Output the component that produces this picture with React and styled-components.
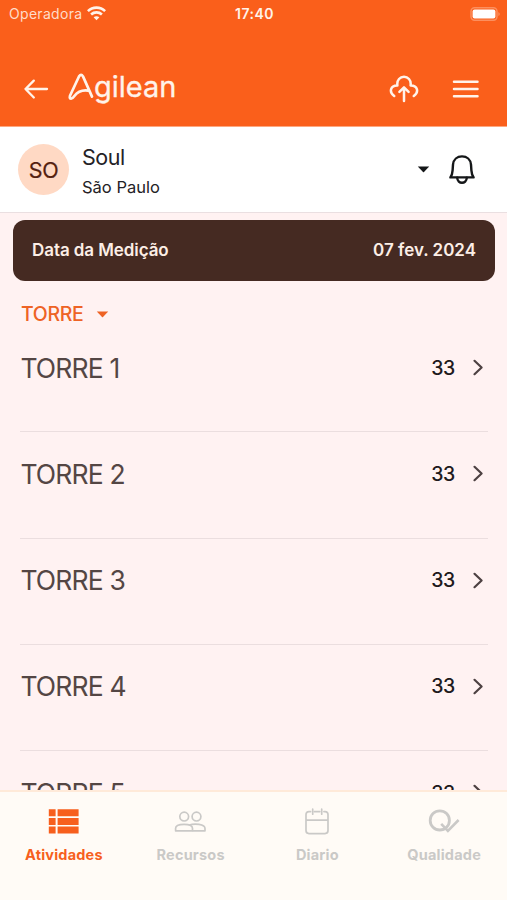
import React from "react";
import styled, { createGlobalStyle } from "styled-components";

const GlobalStyle = createGlobalStyle`
  *, *::before, *::after { box-sizing: border-box; }
  html, body { margin: 0; padding: 0; overflow: hidden; }
  body { font-family: Inter, "Liberation Sans", sans-serif; }
  svg { display: block; flex: none; }
  button { border: 0; padding: 0; background: none; font: inherit; color: inherit; }
`;

const Screen = styled.div`
  display: flex;
  flex-direction: column;
  width: 507px;
  height: 900px;
  overflow: hidden;
  background: #fff2f2;
`;

const Header = styled.header`
  flex: none;
  height: 127px;
  background: #fa5f1b;
  color: #fff3ea;
  border-bottom: 1px solid #fda880;
`;

const StatusBar = styled.div`
  display: grid;
  grid-template-columns: 1fr auto 1fr;
  align-items: center;
  height: 27px;
  padding: 0 7px 0 9px;
  font-size: 14px;
  line-height: 20px;
`;

const Carrier = styled.div`
  display: flex;
  align-items: center;
  gap: 5px;
  letter-spacing: 0.3px;
  color: #ffdcc9;
`;

const Clock = styled.div`
  font-weight: 600;
  letter-spacing: 0.5px;
`;

const BatterySlot = styled.div`
  justify-self: end;
`;

const Toolbar = styled.div`
  display: flex;
  align-items: center;
  height: 99px;
  padding: 24px 28px 0 23px;
`;

const Logo = styled.div`
  display: flex;
  align-items: center;
  height: 40px;
  margin: -3px 0 0 18px;
`;

const LogoText = styled.span`
  font-size: 29px;
  line-height: 36px;
  margin-left: -1px;
  letter-spacing: 0;
  -webkit-text-stroke: 0.3px;
`;

const Actions = styled.div`
  display: flex;
  align-items: center;
  gap: 33px;
  margin-left: auto;
`;

const Profile = styled.section`
  flex: none;
  display: flex;
  align-items: center;
  height: 86px;
  padding: 0 31px 0 18px;
  background: #fff;
  border-bottom: 1px solid #eadfe1;
`;

const Avatar = styled.div`
  display: flex;
  align-items: center;
  justify-content: center;
  width: 51px;
  height: 51px;
  border-radius: 50%;
  background: #ffd9c4;
  color: #54200f;
  font-size: 21.5px;
  letter-spacing: -0.4px;
  -webkit-text-stroke: 0.2px;
`;

const Identity = styled.div`
  display: flex;
  flex-direction: column;
  margin-left: 13px;
  padding-top: 4px;
  color: #242226;
`;

const Name = styled.div`
  font-size: 21.5px;
  line-height: 31px;
  letter-spacing: -0.5px;
`;

const City = styled.div`
  font-size: 16.5px;
  line-height: 29px;
`;

const ProfileActions = styled.div`
  display: flex;
  align-items: center;
  gap: 18px;
  margin-left: auto;
  color: #151719;
`;

const DateCard = styled.section`
  flex: none;
  display: flex;
  align-items: center;
  justify-content: space-between;
  height: 61px;
  margin: 7px 12px 0 13px;
  padding: 0 19px 2px;
  border-radius: 12px;
  background: #452a22;
  color: #fceee6;
  font-size: 17px;
  font-weight: 600;
`;

const DateText = styled.span`
  letter-spacing: ${(p) => p.$spacing}px;
`;

const LevelFilter = styled.button`
  flex: none;
  display: flex;
  align-items: center;
  gap: 13px;
  height: 45px;
  padding: 21px 0 0 21px;
  color: #ee6325;
  font-size: 19.5px;
  font-weight: 500;
  line-height: 24px;
  letter-spacing: -0.35px;
`;

const List = styled.main`
  flex: 1;
  min-height: 0;
  overflow: hidden;
  padding: 0 19px 0 20px;
`;

const Row = styled.div`
  display: flex;
  align-items: flex-start;
  height: 106.25px;
  padding: 25.5px 3px 0 0.4px;
  border-bottom: 1px solid #ebdedf;
  line-height: 33px;
`;

const RowTitle = styled.span`
  font-size: 26.5px;
  letter-spacing: -0.85px;
  color: #544644;
`;

const RowCount = styled.span`
  margin-left: auto;
  font-size: 19.5px;
  font-weight: 500;
  letter-spacing: -0.3px;
  color: #211a1c;
`;

const Chevron = styled.svg`
  margin: 7.5px 0 0 17px;
`;

const TabBar = styled.nav`
  flex: none;
  display: grid;
  grid-template-columns: repeat(4, 1fr);
  height: 110px;
  padding-top: 15px;
  border-top: 2px solid #ffead9;
  background: #fffbf6;
`;

const Tab = styled.button`
  display: flex;
  flex-direction: column;
  align-items: center;
  justify-content: flex-start;
  gap: 8px;
  color: ${(p) => (p.$active ? "#f75f1d" : "#cac9c7")};
`;

const TabLabel = styled.span`
  font-size: 14.5px;
  font-weight: 700;
  line-height: 20px;
  letter-spacing: 0.2px;
  padding-left: 1px;
`;

const WifiIcon = () => (
  <svg width="19" height="15" viewBox="0 0 19 15" fill="none" stroke="#fff3ea" strokeWidth="2.6">
    <path d="M.9 5.1C5.6.4 13.4.4 18.1 5.1" />
    <path d="M4.1 8.5c3-2.8 7.8-2.8 10.8 0" />
    <path d="M6.6 11.3q2.9-2.3 5.8 0L9.5 14.2z" fill="#fff3ea" stroke="none" />
  </svg>
);

const BatteryIcon = () => (
  <svg width="30" height="14" viewBox="0 0 30 14">
    <rect x="1" y="0.8" width="26" height="12.4" rx="3.6" fill="none" stroke="#fc8f5e" strokeWidth="1.5" />
    <rect x="2.6" y="2.4" width="22.8" height="9.2" rx="2" fill="#fff" />
    <path d="M28.3 4.9q1.5.7 1.5 2.1t-1.5 2.1z" fill="#fc8f5e" />
  </svg>
);

const BackIcon = () => (
  <svg width="27" height="22" viewBox="0 0 27 22" fill="none" stroke="currentColor" strokeWidth="2.3" strokeLinecap="round" strokeLinejoin="round">
    <path d="M24 11H2.5M10.8 2.6L2.5 11l8.3 8.5" />
  </svg>
);

const LogoMark = () => (
  <svg width="27" height="30" viewBox="0 0 27 30" fill="none" stroke="currentColor" strokeWidth="2.7" strokeLinecap="round" strokeLinejoin="round">
    <path d="M24 24.6L15 4.4Q13.1 1.4 11.1 4.3L2 23.8Q1.2 26.5 3.2 26.6 4.6 26.6 6.4 24C9.4 20 13.4 17.8 20 18.6" />
  </svg>
);

const CloudUploadIcon = () => (
  <svg width="30" height="30" viewBox="0 0 30 30" fill="none" stroke="currentColor" strokeWidth="2.5" strokeLinecap="round" strokeLinejoin="round">
    <path d="M5.2 22C-.4 18 1.6 11.2 8.4 11.4c-1.6-11.4 14.8-11.4 13.2 0 6.8-.2 8.8 6.6 3.2 10.6" />
    <path d="M15 27V14M10.4 17.8L15 13.3l4.6 4.5" />
  </svg>
);

const MenuIcon = () => (
  <svg width="27" height="22" viewBox="0 0 27 22" stroke="currentColor" strokeWidth="2.5" strokeLinecap="round">
    <path d="M2 3.7h23.5M2 11h23.5M2 18.2h23.5" />
  </svg>
);

const Caret = () => (
  <svg width="13" height="7" viewBox="0 0 13 7" fill="currentColor">
    <path d="M.8.4h11.4L7 6Q6.5 6.5 6 6z" />
  </svg>
);

const BellIcon = () => (
  <svg width="28" height="32" viewBox="0 0 28 32" fill="none" stroke="currentColor" strokeWidth="2.4" strokeLinejoin="round" strokeLinecap="round">
    <path d="M2.4 23.4q2-3 2.2-7L5 10.6C5.5 5.4 9.2 2.4 14 2.4s8.5 3 9 8.2l.4 5.8q.2 4 2.2 7z" />
    <path d="M9.2 23.8c.4 6.6 9.2 6.6 9.6 0" />
  </svg>
);

const ListIcon = () => (
  <svg width="32" height="30" viewBox="0 0 32 30" fill="currentColor">
    <path d="M1.8 2.2h6.8v7h-6.8zM10.6 2.2h21v7h-21zM1.8 11h6.8v7h-6.8zM10.6 11h21v7h-21zM1.8 19.6h6.8v7h-6.8zM10.6 19.6h21v7h-21z" />
  </svg>
);

const PeopleIcon = () => (
  <svg width="32" height="30" viewBox="0 0 32 30" fill="none" stroke="currentColor" strokeWidth="1.7" strokeLinejoin="round">
    <circle cx="10.2" cy="9.6" r="4.4" />
    <circle cx="22.5" cy="9.6" r="4.4" />
    <path d="M1.6 23.8v-2.5c0-5.3 16.9-5.3 16.9 0v2.5z" />
    <path d="M15.3 18c5-1.8 15.7-1.1 15.7 3.4v2.4H18.5" />
  </svg>
);

const CalendarIcon = () => (
  <svg width="32" height="30" viewBox="0 0 32 30" fill="none" stroke="currentColor" strokeWidth="1.7" strokeLinecap="round">
    <path d="M9.6 4.6H8Q5 4.6 5 7.6v16q0 3 3 3h16q3 0 3-3v-16q0-3-3-3h-1.1M13.3 4.6h5.5M5 13.2h22" />
    <path d="M11.7 2.2v5M20.7 2.2v5" />
  </svg>
);

const QualityIcon = () => (
  <svg width="32" height="30" viewBox="0 0 32 30" fill="none" stroke="currentColor">
    <circle cx="11.8" cy="13.4" r="9.6" strokeWidth="2.8" />
    <path d="M13.2 16.8l6.7 7L30.6 13" strokeWidth="2.6" />
  </svg>
);

const towers = [1, 2, 3, 4, 5];

const tabs = [
  { label: "Atividades", Icon: ListIcon, active: true },
  { label: "Recursos", Icon: PeopleIcon },
  { label: "Diario", Icon: CalendarIcon },
  { label: "Qualidade", Icon: QualityIcon },
];

export default function App() {
  return (
    <Screen>
      <GlobalStyle />
      <Header>
        <StatusBar>
          <Carrier>
            Operadora
            <WifiIcon />
          </Carrier>
          <Clock>17:40</Clock>
          <BatterySlot>
            <BatteryIcon />
          </BatterySlot>
        </StatusBar>
        <Toolbar>
          <button aria-label="Voltar"><BackIcon /></button>
          <Logo>
            <LogoMark />
            <LogoText>gilean</LogoText>
          </Logo>
          <Actions>
            <button aria-label="Enviar"><CloudUploadIcon /></button>
            <button aria-label="Menu"><MenuIcon /></button>
          </Actions>
        </Toolbar>
      </Header>
      <Profile>
        <Avatar>SO</Avatar>
        <Identity>
          <Name>Soul</Name>
          <City>São Paulo</City>
        </Identity>
        <ProfileActions>
          <Caret />
          <BellIcon />
        </ProfileActions>
      </Profile>
      <DateCard>
        <DateText $spacing={-0.08}>Data da Medição</DateText>
        <DateText $spacing={0}>07 fev. 2024</DateText>
      </DateCard>
      <LevelFilter>
        TORRE
        <Caret />
      </LevelFilter>
      <List>
        {towers.map((n) => (
          <Row key={n}>
            <RowTitle>TORRE {n}</RowTitle>
            <RowCount>33</RowCount>
            <Chevron width="13" height="17" viewBox="0 0 13 17" fill="none" stroke="#4d4142" strokeWidth="2.2" strokeLinecap="round" strokeLinejoin="round">
              <path d="M2.5 1.8L9.6 8.5l-7.1 6.7" />
            </Chevron>
          </Row>
        ))}
      </List>
      <TabBar>
        {tabs.map(({ label, Icon, active }) => (
          <Tab key={label} $active={active}>
            <Icon />
            <TabLabel>{label}</TabLabel>
          </Tab>
        ))}
      </TabBar>
    </Screen>
  );
}
